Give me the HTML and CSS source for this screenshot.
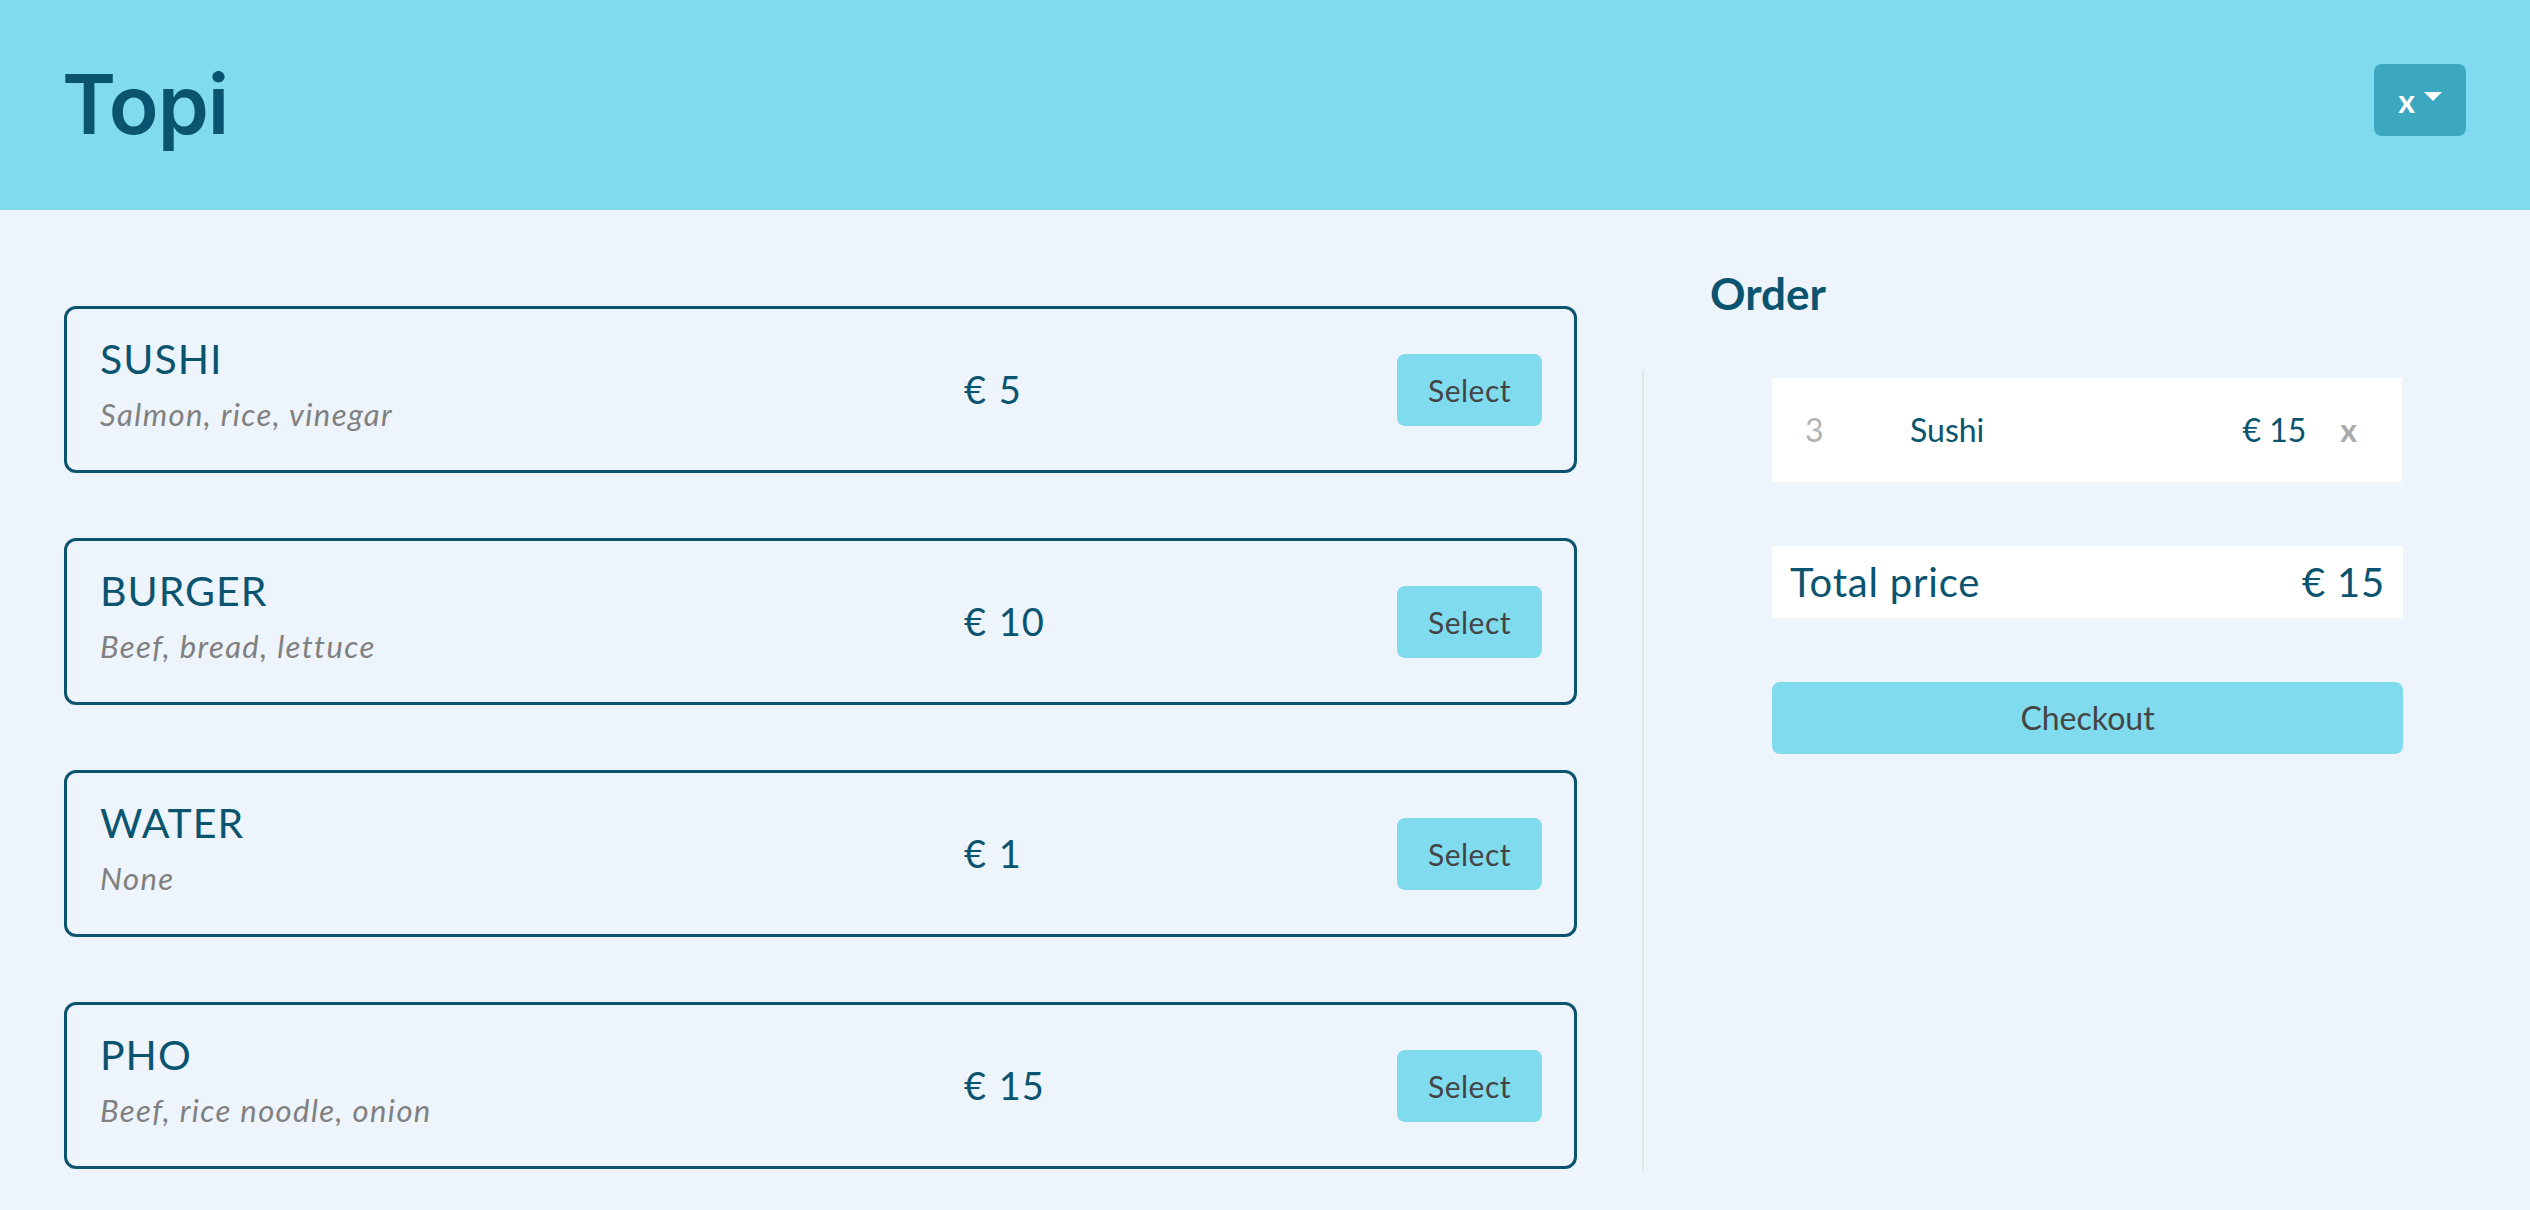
FILE: index.html
```html
<!DOCTYPE html>
<html lang="en">
<head>
<meta charset="utf-8">
<title>Topi</title>
<link rel="stylesheet" href="styles.css">
</head>
<body>
<header class="topbar">
  <h1 class="brand">Topi</h1>
  <button class="lang-btn"><span class="lang-x">x</span><span class="caret"></span></button>
</header>
<main class="main">
  <section class="menu">
    <div class="card">
      <div class="card-info">
        <div class="card-name">SUSHI</div>
        <div class="card-desc">Salmon, rice, vinegar</div>
      </div>
      <div class="card-price">€ 5</div>
      <button class="select-btn">Select</button>
    </div>
    <div class="card">
      <div class="card-info">
        <div class="card-name">BURGER</div>
        <div class="card-desc">Beef, bread, lettuce</div>
      </div>
      <div class="card-price">€ 10</div>
      <button class="select-btn">Select</button>
    </div>
    <div class="card">
      <div class="card-info">
        <div class="card-name">WATER</div>
        <div class="card-desc">None</div>
      </div>
      <div class="card-price">€ 1</div>
      <button class="select-btn">Select</button>
    </div>
    <div class="card">
      <div class="card-info">
        <div class="card-name">PHO</div>
        <div class="card-desc">Beef, rice noodle, onion</div>
      </div>
      <div class="card-price">€ 15</div>
      <button class="select-btn">Select</button>
    </div>
  </section>
  <aside class="order">
    <h2 class="order-title">Order</h2>
    <div class="order-body">
      <div class="order-item">
        <span class="item-qty">3</span>
        <span class="item-name">Sushi</span>
        <span class="item-price">€ 15</span>
        <span class="item-remove">x</span>
      </div>
      <div class="total">
        <span>Total price</span>
        <span>€ 15</span>
      </div>
      <button class="checkout-btn">Checkout</button>
    </div>
  </aside>
</main>
</body>
</html>
```
FILE: styles.css
```css
* { box-sizing: border-box; }

html, body {
  margin: 0;
  padding: 0;
}

body {
  min-height: 100vh;
  display: flex;
  flex-direction: column;
  background: #edf4fb;
  font-family: "Lato", "Noto Sans", sans-serif;
  color: #0a5470;
}

.topbar {
  height: 210px;
  flex: none;
  background: #7fdbed;
  display: flex;
  align-items: center;
  justify-content: space-between;
  padding: 0 64px 0 62px;
}

.brand {
  margin: 0;
  font-family: "Inter", "Lato", sans-serif;
  font-weight: 600;
  font-size: 82px;
  line-height: 1;
  letter-spacing: -1px;
  color: #0a5470;
}

.lang-btn {
  width: 92px;
  height: 72px;
  border: none;
  border-radius: 8px;
  background: #3ba8c0;
  display: flex;
  align-items: center;
  justify-content: center;
  gap: 9px;
  padding: 0;
  margin-top: -10px;
}

.lang-x {
  font-family: "Lato", sans-serif;
  font-weight: 700;
  font-size: 32px;
  color: #fff;
  line-height: 1;
  margin-top: 2px;
}

.caret {
  width: 0;
  height: 0;
  border-top: 9px solid #fff;
  border-left: 9.5px solid transparent;
  border-right: 9.5px solid transparent;
  margin-top: -8px;
}

.main {
  flex: 1;
  display: flex;
  padding: 57px 64px 40px 64px;
}

.menu {
  width: 1513px;
  flex: none;
  padding-top: 39px;
  display: flex;
  flex-direction: column;
  gap: 65px;
}

.card {
  height: 167px;
  border: 3px solid #0a5470;
  border-radius: 12px;
  padding: 0 32px 0 33px;
  display: grid;
  grid-template-columns: 864px 1fr auto;
  align-items: center;
}

.card-info {
  padding-bottom: 11px;
}

.card-name {
  font-size: 41px;
  line-height: 1.17;
  letter-spacing: 1px;
  color: #0a5470;
}

.card-desc {
  margin-top: 14px;
  font-size: 31px;
  line-height: 1.16;
  font-style: italic;
  letter-spacing: 1.4px;
  color: #808080;
}

.card-price {
  font-size: 38px;
  line-height: 1.15;
  letter-spacing: 1px;
  word-spacing: 1px;
  color: #0a5470;
}

.select-btn {
  width: 145px;
  height: 72px;
  border: none;
  border-radius: 8px;
  background: #7fdbed;
  color: #444;
  font-family: "Lato", sans-serif;
  font-size: 30px;
  letter-spacing: 0.5px;
  padding: 0;
}

.order {
  flex: 1;
  margin-left: 65px;
  display: flex;
  flex-direction: column;
}

.order-title {
  margin: 0 0 50px 0;
  padding-left: 68px;
  font-size: 44px;
  line-height: 1.2;
  font-weight: 700;
  color: #0a5470;
}

.order-body {
  flex: 1;
  border-left: 2px solid #e2e4e6;
  padding: 8px 0 0 128px;
  display: flex;
  flex-direction: column;
  gap: 64px;
}

.order-item {
  width: 630px;
  height: 104px;
  background: #fff;
  display: flex;
  align-items: center;
  padding: 0 45px 0 33px;
  font-size: 32px;
}

.item-qty {
  width: 105px;
  color: #b3b3b3;
}

.item-name {
  flex: 1;
  color: #0a5470;
}

.item-price {
  color: #0a5470;
}

.item-remove {
  margin-left: 34px;
  color: #aaaaaa;
  font-weight: 700;
}

.total {
  width: 631px;
  height: 72px;
  background: #fff;
  display: flex;
  align-items: center;
  justify-content: space-between;
  padding: 0 18px;
  font-size: 40px;
  letter-spacing: 0.8px;
  color: #0a5470;
}

.checkout-btn {
  width: 631px;
  height: 72px;
  border: none;
  border-radius: 8px;
  background: #7fdbed;
  color: #444;
  font-family: "Lato", sans-serif;
  font-size: 32px;
  padding: 0;
}
```
